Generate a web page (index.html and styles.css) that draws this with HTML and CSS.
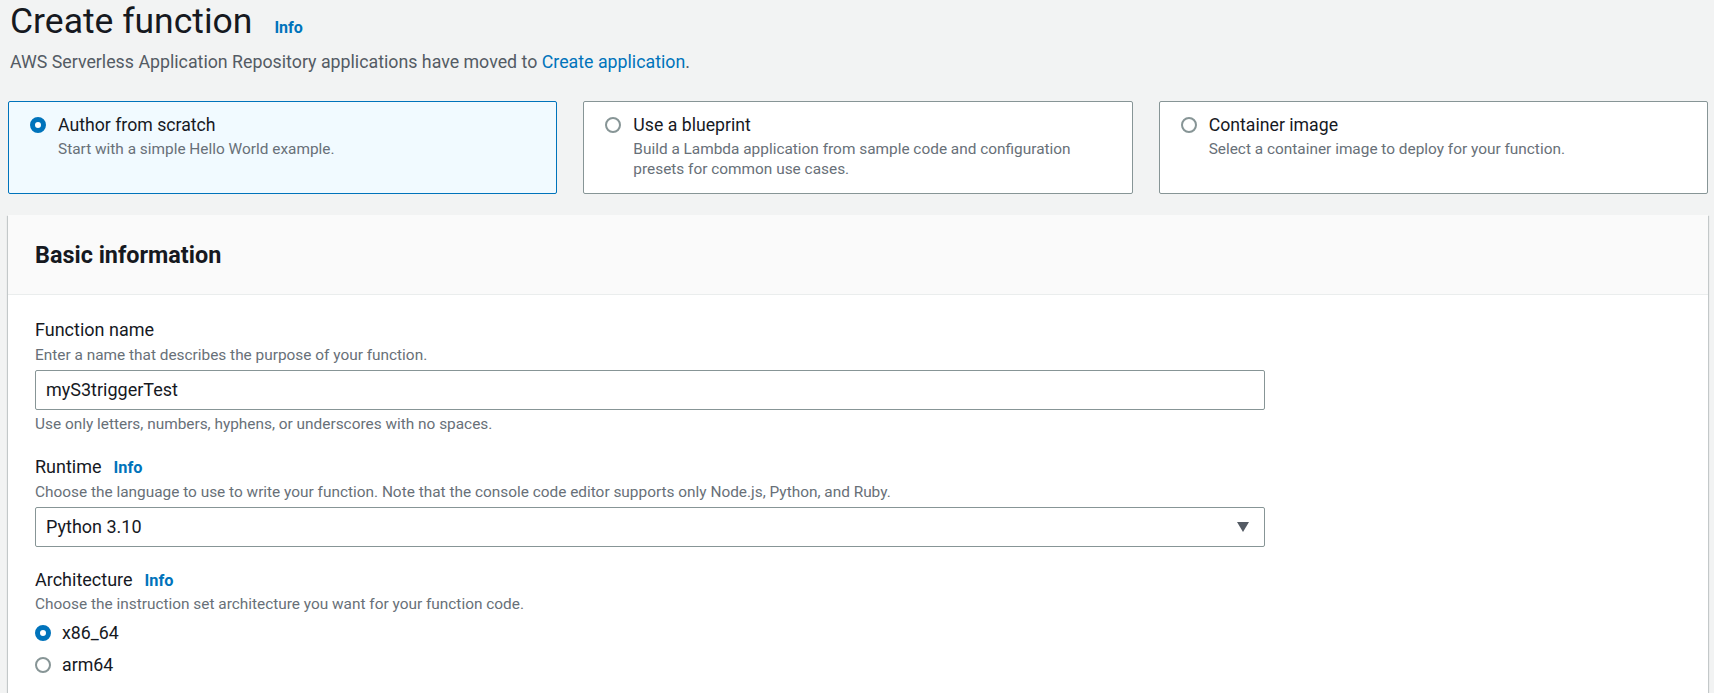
FILE: index.html
```html
<!DOCTYPE html>
<html lang="en">
<head>
<meta charset="utf-8">
<title>Create function</title>
<link rel="stylesheet" href="styles.css">
</head>
<body>
<div class="page">
  <header class="page-header">
    <h1 class="title">Create function<a class="info info-title" href="#">Info</a></h1>
    <p class="subtitle">AWS Serverless Application Repository applications have moved to <a class="link" href="#">Create application</a>.</p>
  </header>

  <div class="options">
    <div class="option selected">
      <span class="radio checked"></span>
      <div class="opt-text">
        <div class="opt-title">Author from scratch</div>
        <div class="opt-desc">Start with a simple Hello World example.</div>
      </div>
    </div>
    <div class="option">
      <span class="radio"></span>
      <div class="opt-text">
        <div class="opt-title">Use a blueprint</div>
        <div class="opt-desc">Build a Lambda application from sample code and configuration<br>presets for common use cases.</div>
      </div>
    </div>
    <div class="option">
      <span class="radio"></span>
      <div class="opt-text">
        <div class="opt-title">Container image</div>
        <div class="opt-desc">Select a container image to deploy for your function.</div>
      </div>
    </div>
  </div>

  <section class="panel">
    <div class="panel-header">
      <h2 class="panel-title">Basic information</h2>
    </div>
    <div class="panel-body">
      <div class="field">
        <div class="label">Function name</div>
        <div class="desc">Enter a name that describes the purpose of your function.</div>
        <div class="input">myS3triggerTest</div>
        <div class="constraint">Use only letters, numbers, hyphens, or underscores with no spaces.</div>
      </div>

      <div class="field">
        <div class="label">Runtime<a class="info" href="#">Info</a></div>
        <div class="desc">Choose the language to use to write your function. Note that the console code editor supports only Node.js, Python, and Ruby.</div>
        <div class="input select">
          <span>Python 3.10</span>
          <svg class="caret" width="12" height="10" viewBox="0 0 12 10"><path d="M0 0H12L6 10Z" fill="#545b64"/></svg>
        </div>
      </div>

      <div class="field">
        <div class="label">Architecture<a class="info" href="#">Info</a></div>
        <div class="desc">Choose the instruction set architecture you want for your function code.</div>
        <div class="radio-group">
          <div class="radio-row"><span class="radio checked"></span><span class="radio-label">x86_64</span></div>
          <div class="radio-row"><span class="radio"></span><span class="radio-label">arm64</span></div>
        </div>
      </div>
    </div>
  </section>
</div>
</body>
</html>
```

FILE: styles.css
```css
html, body {
  margin: 0;
  padding: 0;
  overflow: hidden;
}
body {
  background: #f2f3f3;
  font-family: Roboto, "Liberation Sans", Arial, sans-serif;
  color: #16191f;
  height: 693px;
}
a { text-decoration: none; }

.page {
  padding: 0 6px 0 8px;
}

.title {
  margin: 1px 0 0 2px;
  font-size: 35.5px;
  line-height: 40px;
  font-weight: 400;
}
.info {
  color: #0073bb;
  font-weight: 700;
  font-size: 16px;
  line-height: 1;
}
.info-title { margin-left: 22px; }

.subtitle {
  margin: 8.5px 0 0 2px;
  font-size: 17.8px;
  line-height: 24px;
  color: #545b64;
}
.link { color: #0073bb; }

.options {
  margin-top: 27.5px;
  display: grid;
  grid-template-columns: repeat(3, 1fr);
  gap: 26px;
}
.option {
  display: flex;
  gap: 12px;
  background: #fff;
  border: 1px solid #879596;
  border-radius: 2px;
  padding: 12px 20px 14px 21px;
}
.option.selected {
  background: #f1faff;
  border-color: #0073bb;
}
.opt-title {
  font-size: 17.7px;
  line-height: 22px;
}
.opt-desc {
  margin-top: 3px;
  font-size: 15.4px;
  line-height: 20px;
  color: #687078;
}

.radio {
  flex: none;
  box-sizing: border-box;
  width: 16px;
  height: 16px;
  margin-top: 3px;
  border-radius: 50%;
  border: 2px solid #879596;
  background: #fff;
}
.radio.checked {
  border: 5px solid #0073bb;
}

.panel {
  margin-top: 21px;
  background: #fff;
  box-shadow: 0 1px 1px 0 rgba(0,28,36,.3), 1px 1px 1px 0 rgba(0,28,36,.15), -1px 1px 1px 0 rgba(0,28,36,.15);
}
.panel-header {
  height: 79px;
  background: #fafafa;
  border-bottom: 1px solid #eaeded;
  display: flex;
  align-items: center;
  padding: 0 27px;
}
.panel-title {
  margin: 0;
  font-size: 23.4px;
  font-weight: 700;
  line-height: 30px;
}
.panel-body {
  padding: 24px 27px 30px;
  display: flex;
  flex-direction: column;
  gap: 22px;
}
.field {
  display: flex;
  flex-direction: column;
}
.label {
  font-size: 18px;
  line-height: 22px;
}
.label .info {
  margin-left: 12px;
  font-size: 16.3px;
}
.desc {
  font-size: 15.4px;
  line-height: 20px;
  color: #687078;
  margin-top: 3.5px;
}
.input {
  box-sizing: border-box;
  width: 1230px;
  height: 40px;
  margin-top: 5px;
  border: 1px solid #879596;
  border-radius: 2px;
  padding: 0 15px 0 10px;
  display: flex;
  align-items: center;
  font-size: 18px;
  background: #fff;
}
.select {
  justify-content: space-between;
}
.constraint {
  margin-top: 4.5px;
  font-size: 15.4px;
  line-height: 20px;
  color: #687078;
}
.radio-group {
  margin-top: 7.5px;
  display: flex;
  flex-direction: column;
  gap: 10px;
}
.radio-row {
  display: flex;
  gap: 11px;
  align-items: flex-start;
}
.radio-label {
  font-size: 17.8px;
  line-height: 22px;
}
```
